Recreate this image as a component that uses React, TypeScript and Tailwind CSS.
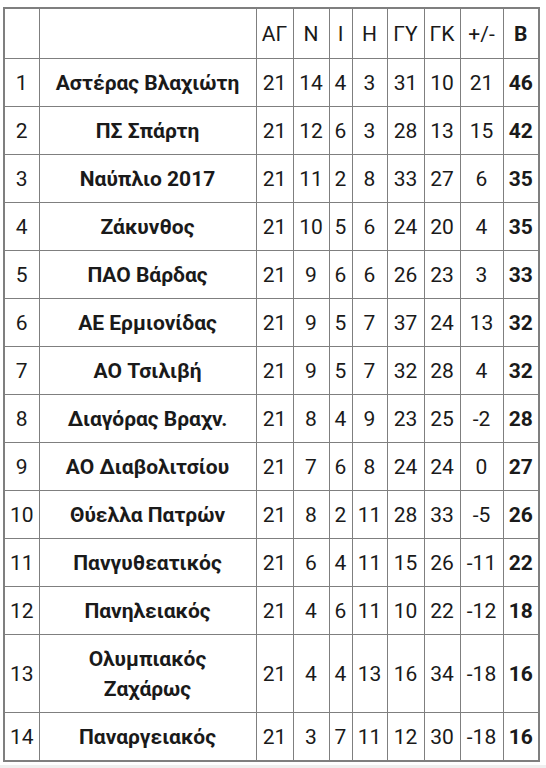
import React from "react";

type Row = [string, string, number, number, number, number, number, number, number, number];

const rows: Row[] = [
  ["1", "Αστέρας Βλαχιώτη", 21, 14, 4, 3, 31, 10, 21, 46],
  ["2", "ΠΣ Σπάρτη", 21, 12, 6, 3, 28, 13, 15, 42],
  ["3", "Ναύπλιο 2017", 21, 11, 2, 8, 33, 27, 6, 35],
  ["4", "Ζάκυνθος", 21, 10, 5, 6, 24, 20, 4, 35],
  ["5", "ΠΑΟ Βάρδας", 21, 9, 6, 6, 26, 23, 3, 33],
  ["6", "ΑΕ Ερμιονίδας", 21, 9, 5, 7, 37, 24, 13, 32],
  ["7", "ΑΟ Τσιλιβή", 21, 9, 5, 7, 32, 28, 4, 32],
  ["8", "Διαγόρας Βραχν.", 21, 8, 4, 9, 23, 25, -2, 28],
  ["9", "ΑΟ Διαβολιτσίου", 21, 7, 6, 8, 24, 24, 0, 27],
  ["10", "Θύελλα Πατρών", 21, 8, 2, 11, 28, 33, -5, 26],
  ["11", "Πανγυθεατικός", 21, 6, 4, 11, 15, 26, -11, 22],
  ["12", "Πανηλειακός", 21, 4, 6, 11, 10, 22, -12, 18],
  ["13", "Ολυμπιακός|Ζαχάρως", 21, 4, 4, 13, 16, 34, -18, 16],
  ["14", "Παναργειακός", 21, 3, 7, 11, 12, 30, -18, 16],
];

const headers = ["", "", "ΑΓ", "Ν", "Ι", "Η", "ΓΥ", "ΓΚ", "+/-", "Β"];
const widths = [35, 217, 37, 36, 23, 35, 37, 36, 43, 36];

const cell = "border border-[#7f7f7f] text-center align-middle pt-[9px] pb-[8px] px-0 leading-[30px] whitespace-nowrap";

export default function App() {
  return (
    <div
      className="w-[546px] h-[768px] bg-white flex flex-col text-[#1a1a1a] text-[21px]"
      style={{ fontFamily: "Roboto, 'Noto Sans', sans-serif" }}
    >
      <div className="pt-[7px] pl-[3px] flex-1">
        <table className="table-fixed border-collapse border-2 border-[#7f7f7f] w-[535px]">
          <colgroup>
            {widths.map((w, i) => (
              <col key={i} style={{ width: w }} />
            ))}
          </colgroup>
          <thead>
            <tr>
              {headers.map((h, i) => (
                <th
                  key={i}
                  className={`${cell} pt-[10px] pb-[9px] ${i === 9 ? "font-bold" : "font-normal"}`}
                >
                  {h}
                </th>
              ))}
            </tr>
          </thead>
          <tbody>
            {rows.map((r) => (
              <tr key={r[0]}>
                {r.map((v, i) => (
                  <td
                    key={i}
                    className={`${cell} ${i === 1 || i === 9 ? "font-bold" : "font-normal"}`}
                  >
                    {i === 1 && typeof v === "string" && v.includes("|") ? (
                      <>
                        {v.split("|")[0]}
                        <br />
                        {v.split("|")[1]}
                      </>
                    ) : (
                      v
                    )}
                  </td>
                ))}
              </tr>
            ))}
          </tbody>
        </table>
      </div>
      <div className="h-[3px] bg-[#efefef]" />
    </div>
  );
}
